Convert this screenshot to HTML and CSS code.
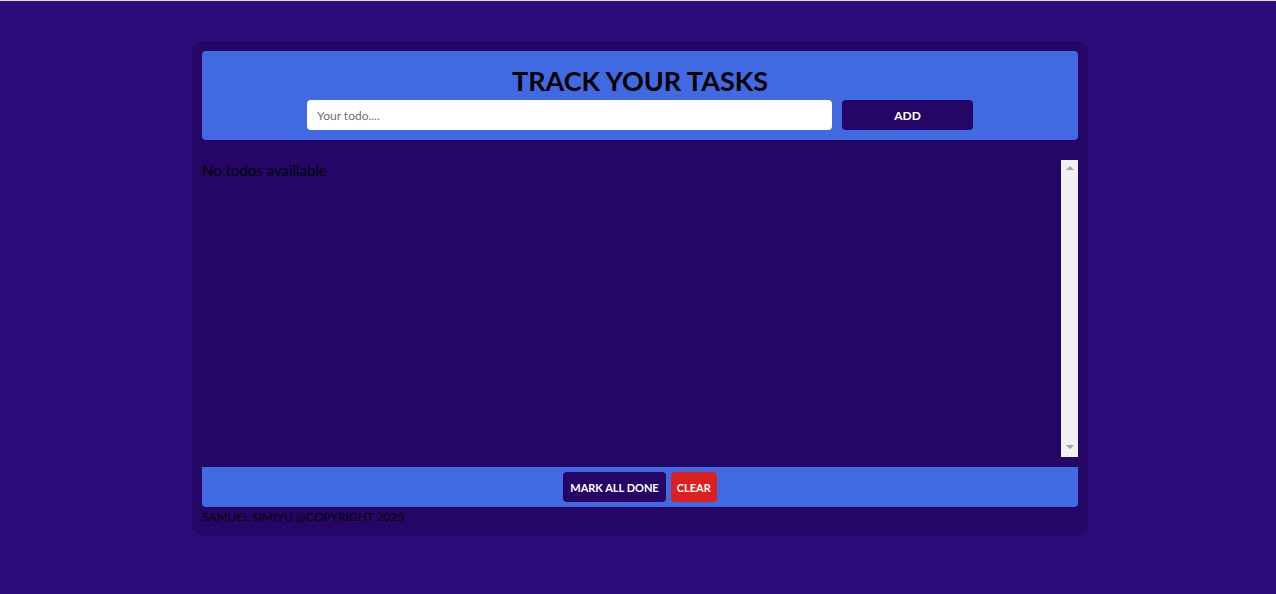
FILE: index.html
```html
<!DOCTYPE html>
<html lang="en">
<head>
<meta charset="UTF-8">
<title>Track your tasks</title>
<link rel="stylesheet" href="styles.css">
</head>
<body>
<div class="app">
  <header class="head">
    <h1 class="title">TRACK YOUR TASKS</h1>
    <form class="entry">
      <input class="todo-input" type="text" placeholder="Your todo....">
      <button class="btn btn-add" type="button">ADD</button>
    </form>
  </header>
  <section class="list">
    <div class="list-body">
      <p class="empty">No todos availlable</p>
    </div>
    <div class="scrollbar">
      <span class="arrow arrow-up"></span>
      <span class="arrow arrow-down"></span>
    </div>
  </section>
  <div class="actions">
    <button class="btn btn-dark" type="button">MARK ALL DONE</button>
    <button class="btn btn-red" type="button">CLEAR</button>
  </div>
  <p class="copy">SAMUEL SIMIYU @COPYRIGHT 2025</p>
</div>
</body>
</html>
```

FILE: styles.css
```css
* { box-sizing: border-box; }

html, body {
  margin: 0;
  padding: 0;
}

body {
  background: #2d0b7b;
  border-top: 1px solid #dcdcdc;
  padding-left: 4px;
  font-family: Lato, "Open Sans", sans-serif;
  min-height: 594px;
}

.app {
  width: 896px;
  margin: 40px auto 0;
  padding: 10px;
  background: #250667;
  border-radius: 12px;
}

.head {
  background: #4169e1;
  border-radius: 4px;
  padding: 10px;
  height: 89px;
  display: flex;
  flex-direction: column;
  align-items: center;
}

.title {
  margin: 0;
  font-size: 27px;
  line-height: 39px;
  font-weight: 700;
  color: #000;
  text-align: center;
}

.entry {
  margin: 0;
  display: flex;
  gap: 10px;
}

.todo-input {
  width: 525px;
  height: 30px;
  border: none;
  border-radius: 4px;
  padding: 0 10px;
  font-family: inherit;
  font-size: 12px;
  background: #fff;
  outline: none;
}

.todo-input::placeholder {
  color: #6f6f6f;
}

.btn {
  height: 30px;
  border: none;
  border-radius: 4px;
  color: #fff;
  font-family: inherit;
  font-weight: 700;
  font-size: 12px;
  cursor: pointer;
}

.btn-add {
  width: 131px;
  background: #250667;
}

.list {
  margin-top: 20px;
  height: 297px;
  display: flex;
}

.list-body {
  flex: 1;
}

.empty {
  margin: 0;
  padding-top: 1px;
  font-size: 15px;
  line-height: 19px;
  color: #000;
}

.scrollbar {
  width: 17px;
  background: #f1f1f1;
  display: flex;
  flex-direction: column;
  justify-content: space-between;
  align-items: center;
  padding: 6px 0 8px;
}

.arrow {
  width: 0;
  height: 0;
  border-left: 4px solid transparent;
  border-right: 4px solid transparent;
}

.arrow-up {
  border-bottom: 4px solid #a3a3a3;
}

.arrow-down {
  border-top: 4px solid #a3a3a3;
}

.actions {
  margin-top: 10px;
  height: 40px;
  background: #4169e1;
  border-radius: 0 0 4px 4px;
  display: flex;
  justify-content: center;
  align-items: center;
  gap: 5px;
}

.btn-dark {
  background: #250667;
  font-size: 11px;
  padding: 0 7px;
}

.btn-red {
  background: #dc1f1f;
  font-size: 11px;
  padding: 0 6px;
}

.copy {
  margin: 0;
  font-size: 12px;
  line-height: 19px;
  color: #000;
}
```
